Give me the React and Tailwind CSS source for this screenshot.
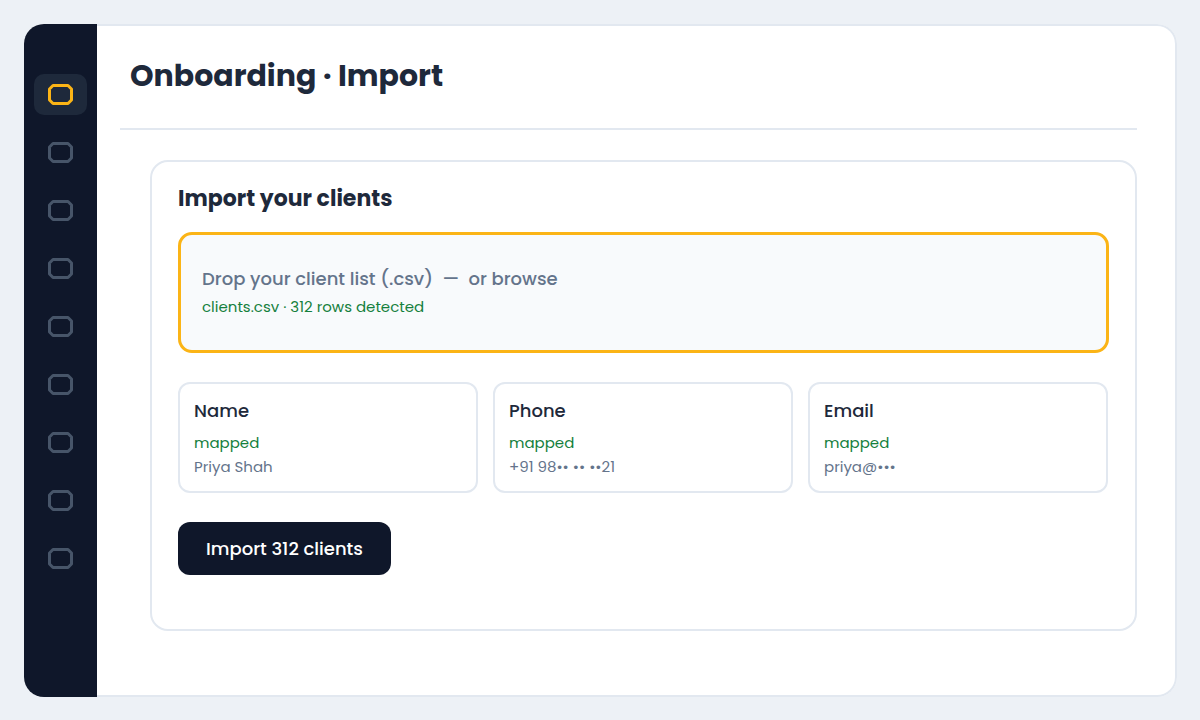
const navItems = [
  'Import',
  'Dashboard',
  'Clients',
  'Calendar',
  'Messages',
  'Documents',
  'Reports',
  'Billing',
  'Settings',
];

const fields = [
  { name: 'Name', sample: 'Priya Shah' },
  { name: 'Phone', sample: '+91 98•• •• ••21' },
  { name: 'Email', sample: 'priya@•••' },
];

function NavIcon() {
  return (
    <svg width="25" height="21" viewBox="0 0 25 21" fill="none" aria-hidden="true">
      <path
        d="M5 1.5H20L23.5 5V16L20 19.5H5L1.5 16V5Z"
        stroke="currentColor"
        strokeWidth="3"
        strokeLinejoin="round"
      />
    </svg>
  );
}

function Sidebar() {
  return (
    <nav
      aria-label="Main"
      className="flex w-[73px] shrink-0 flex-col items-center gap-[17px] rounded-l-[20px] bg-[#0f172a] pt-[50px] pb-6"
    >
      {navItems.map((label, i) => (
        <button
          key={label}
          type="button"
          aria-label={label}
          aria-current={i === 0 ? 'page' : undefined}
          className={
            i === 0
              ? 'flex h-[41px] w-[53px] items-center justify-center rounded-[10px] bg-[#1e293b] text-[#fbb416]'
              : 'flex h-[41px] w-[53px] items-center justify-center rounded-[10px] text-[#475569]'
          }
        >
          <NavIcon />
        </button>
      ))}
    </nav>
  );
}

function Dropzone() {
  return (
    <label
      htmlFor="client-file"
      className="mt-[17px] flex min-h-[121px] cursor-pointer flex-col justify-center rounded-[14px] border-3 border-[#fbb416] bg-[#f8fafc] px-[21px]"
    >
      <input id="client-file" type="file" accept=".csv" className="sr-only" />
      <span className="text-lg leading-7 font-medium text-[#64748b]">
        Drop your client list (.csv)&nbsp; —&nbsp; or browse
      </span>
      <span className="text-[15px] leading-7 text-[#15803d]">clients.csv · 312 rows detected</span>
    </label>
  );
}

function FieldCard({ name, sample }) {
  return (
    <li className="rounded-[12px] border-2 border-[#e2e8f0] px-[14px] pt-[13px] pb-3">
      <h3 className="mb-[6px] text-lg leading-7 font-medium text-[#1e293b]">{name}</h3>
      <p className="text-[15px] leading-6 text-[#15803d]">mapped</p>
      <p className="text-[15px] leading-6 text-[#64748b]">{sample}</p>
    </li>
  );
}

export default function App() {
  return (
    <div className="flex min-h-screen bg-[#edf1f6] pt-6 pr-[23px] pb-[23px] pl-6 font-[Poppins,Inter,sans-serif]">
      <div className="flex flex-1 rounded-[20px] bg-white">
        <Sidebar />
        <div className="flex min-w-0 flex-1 flex-col rounded-r-[20px] border-2 border-l-0 border-[#e2e8f0] pr-[38px] pb-16 pl-[23px]">
          <header className="border-b-2 border-[#e2e8f0] px-[10px] pt-[30px] pb-8">
            <h1 className="text-3xl leading-10 font-bold text-[#1e293b]">Onboarding · Import</h1>
          </header>
          <main className="mt-[30px] ml-[30px] flex flex-1 flex-col items-stretch rounded-[18px] border-2 border-[#e2e8f0] px-[26px] pt-[21px] pb-6">
            <h2 className="text-[22px] leading-8 font-bold text-[#1e293b]">Import your clients</h2>
            <Dropzone />
            <ul className="mt-[29px] grid grid-cols-3 gap-[15px] pr-px">
              {fields.map((field) => (
                <FieldCard key={field.name} {...field} />
              ))}
            </ul>
            <button
              type="button"
              className="mt-[29px] h-[53px] self-start rounded-[12px] bg-[#0f172a] px-7 text-lg font-medium text-white"
            >
              Import 312 clients
            </button>
          </main>
        </div>
      </div>
    </div>
  );
}
